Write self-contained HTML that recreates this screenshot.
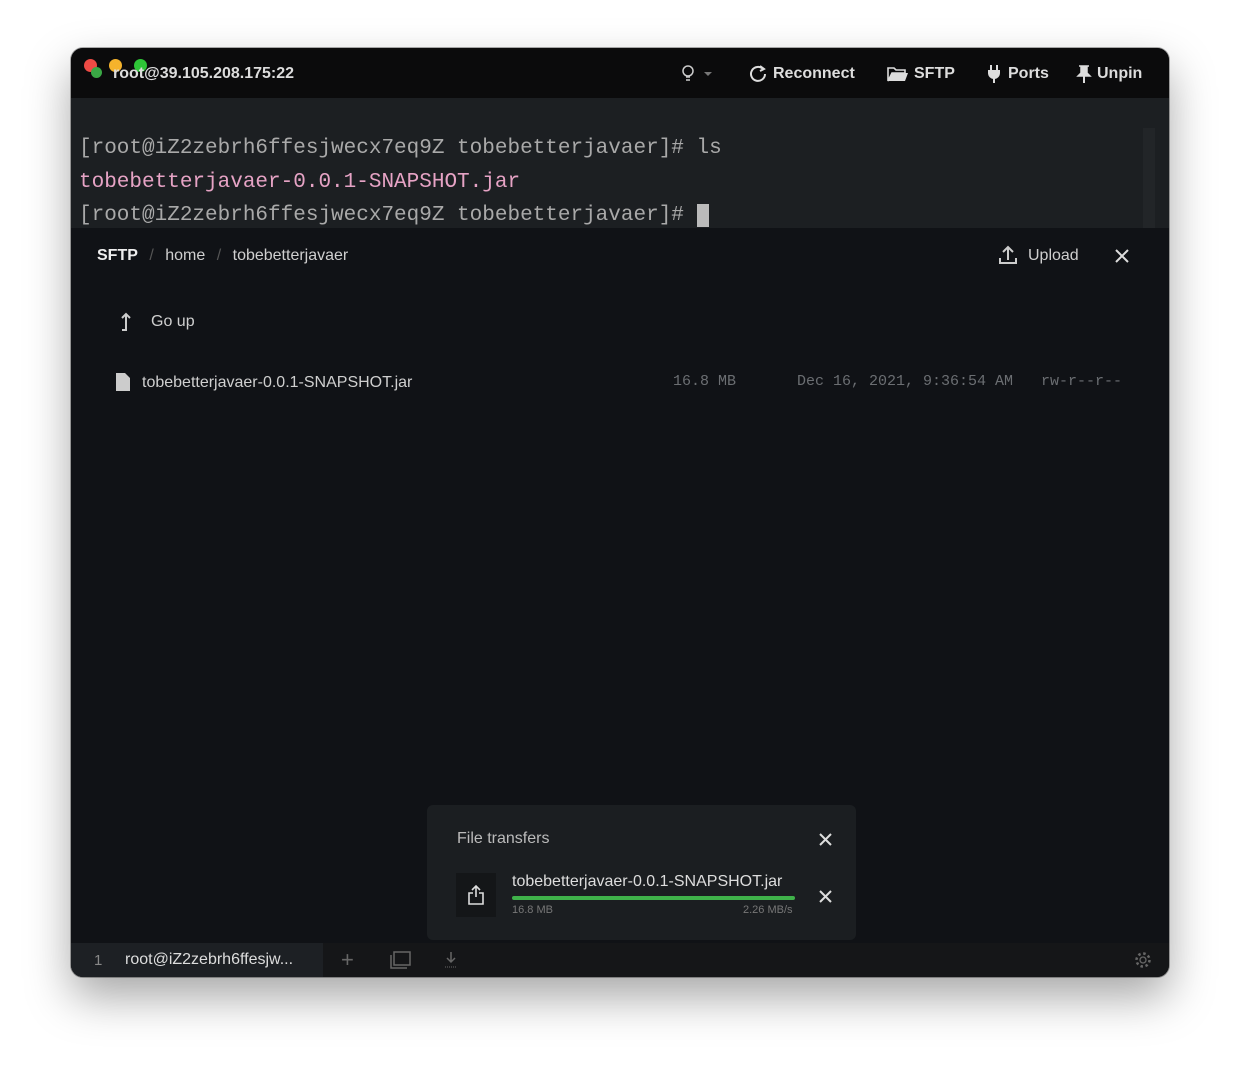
<!DOCTYPE html>
<html><head><style>
*{margin:0;padding:0;box-sizing:border-box}
body{width:1240px;height:1071px;background:#fff;position:relative;overflow:hidden;font-family:"Liberation Sans",sans-serif}
.win{position:absolute;left:71px;top:48px;width:1098px;height:929px;border-radius:12px;overflow:hidden;background:#101216;box-shadow:0 20px 45px rgba(0,0,0,.35),0 0 0 1px rgba(0,0,0,.3)}
.title{position:absolute;left:0;top:0;width:100%;height:50px;background:#0b0b0c;color:#ddd;font-weight:bold;font-size:16px}
.abs{position:absolute}
.term{position:absolute;left:0;top:50px;width:100%;height:130px;background:#1c1f22;font-family:"Liberation Mono",monospace;font-size:21px;color:#a9a9a9}
.term div{position:absolute;left:8px;white-space:pre}
.sftp{position:absolute;left:0;top:180px;width:100%;height:715px;background:#101216;color:#cfcfcf;font-size:16px}
.bottom{position:absolute;left:0;top:895px;width:100%;height:34px;background:#151618}
.mono{font-family:"Liberation Mono",monospace;font-size:15px;color:#6b6e72}
</style></head><body>
<div class="win">
 <div class="title">
  <div class="abs" style="left:13px;top:11px;width:13px;height:13px;border-radius:50%;background:#ee4b45"></div>
  <div class="abs" style="left:20px;top:19px;width:11px;height:11px;border-radius:50%;background:#3aa845"></div>
  <div class="abs" style="left:38px;top:11px;width:13px;height:13px;border-radius:50%;background:#f5b32c"></div>
  <div class="abs" style="left:63px;top:11px;width:13px;height:13px;border-radius:50%;background:#2ec537"></div>
  <div class="abs" style="left:42px;top:17px">root@39.105.208.175:22</div>
  <svg class="abs" style="left:609px;top:16px" width="36" height="20"><circle cx="8" cy="7" r="5" fill="none" stroke="#ccc" stroke-width="1.5"/><path d="M6 13h4M6 16h4" stroke="#ccc" stroke-width="1.5"/><path d="M24 8l4 4 4-4z" fill="#777"/></svg>
  <svg class="abs" style="left:678px;top:16px" width="20" height="20"><path d="M14 5a7 7 0 1 0 2 5" fill="none" stroke="#ddd" stroke-width="2"/><path d="M11 2l4 3-4 2" fill="none" stroke="#ddd" stroke-width="2"/></svg>
  <div class="abs" style="left:702px;top:17px">Reconnect</div>
  <svg class="abs" style="left:816px;top:17px" width="22" height="18"><path d="M1 3h6l2 2h9v3H5L1 16z" fill="none" stroke="#ddd" stroke-width="1.6"/><path d="M5 8h16l-3 8H1z" fill="#ddd"/></svg>
  <div class="abs" style="left:843px;top:17px">SFTP</div>
  <svg class="abs" style="left:915px;top:16px" width="16" height="20"><path d="M5 1v5M11 1v5" stroke="#ddd" stroke-width="2"/><path d="M2 6h12v3a6 6 0 0 1-12 0z" fill="#ddd"/><path d="M8 14v5" stroke="#ddd" stroke-width="2"/></svg>
  <div class="abs" style="left:937px;top:17px">Ports</div>
  <svg class="abs" style="left:1005px;top:16px" width="16" height="20"><path d="M3 2h10M5 2v7l-3 3h12l-3-3V2" fill="#ddd" stroke="#ddd" stroke-width="1.5"/><path d="M8 12v7" stroke="#ddd" stroke-width="2"/></svg>
  <div class="abs" style="left:1026px;top:17px">Unpin</div>
 </div>
 <div class="term">
  <div style="top:39px">[root@iZ2zebrh6ffesjwecx7eq9Z tobebetterjavaer]# ls</div>
  <div style="top:73px;color:#e6a3c5">tobebetterjavaer-0.0.1-SNAPSHOT.jar</div>
  <div style="top:106px">[root@iZ2zebrh6ffesjwecx7eq9Z tobebetterjavaer]# <span style="background:#bbb">&nbsp;</span></div>
  <div style="left:1072px;top:30px;width:12px;height:100px;background:#222528"></div>
 </div>
 <div class="sftp">
  <div class="abs" style="left:26px;top:19px"><b style="color:#eee">SFTP</b> <span style="color:#555;margin:0 7px">/</span> home <span style="color:#555;margin:0 7px">/</span> tobebetterjavaer</div>
  <svg class="abs" style="left:927px;top:17px" width="20" height="20"><path d="M10 15V2M5 7l5-5 5 5" fill="none" stroke="#ccc" stroke-width="2"/><path d="M2 13v5h16v-5" fill="none" stroke="#ccc" stroke-width="2"/></svg>
  <div class="abs" style="left:957px;top:19px">Upload</div>
  <svg class="abs" style="left:1044px;top:21px" width="14" height="14"><path d="M1 1l12 12M13 1L1 13" stroke="#ddd" stroke-width="2"/></svg>
  <svg class="abs" style="left:48px;top:83px" width="14" height="22"><path d="M7 3v16H3M3 7l4-4 4 4" fill="none" stroke="#ccc" stroke-width="2"/></svg>
  <div class="abs" style="left:80px;top:85px">Go up</div>
  <svg class="abs" style="left:45px;top:145px" width="14" height="18"><path d="M0 0h9l5 5v13H0z" fill="#ccc"/></svg>
  <div class="abs" style="left:71px;top:146px">tobebetterjavaer-0.0.1-SNAPSHOT.jar</div>
  <div class="abs mono" style="left:602px;top:145px">16.8 MB</div>
  <div class="abs mono" style="left:726px;top:145px">Dec 16, 2021, 9:36:54 AM</div>
  <div class="abs mono" style="left:970px;top:145px">rw-r--r--</div>
  <div class="abs" style="left:356px;top:577px;width:429px;height:135px;background:#1b1e21;border-radius:6px">
   <div class="abs" style="left:30px;top:25px;color:#bbb">File transfers</div>
   <svg class="abs" style="left:392px;top:28px" width="13" height="13"><path d="M1 1l11 11M12 1L1 12" stroke="#ddd" stroke-width="2"/></svg>
   <div class="abs" style="left:29px;top:68px;width:40px;height:44px;background:#141618"></div>
   <svg class="abs" style="left:40px;top:79px" width="18" height="22"><path d="M9 13V2M5 6l4-4 4 4" fill="none" stroke="#ddd" stroke-width="1.6"/><path d="M6 9H2v11h14V9h-4" fill="none" stroke="#ddd" stroke-width="1.6"/></svg>
   <div class="abs" style="left:85px;top:68px;color:#ddd">tobebetterjavaer-0.0.1-SNAPSHOT.jar</div>
   <div class="abs" style="left:85px;top:91px;width:283px;height:4px;background:#3fb24a;border-radius:2px"></div>
   <div class="abs" style="left:85px;top:99px;font-size:11px;color:#777">16.8 MB</div>
   <div class="abs" style="left:316px;top:99px;font-size:11px;color:#777">2.26 MB/s</div>
   <svg class="abs" style="left:392px;top:85px" width="13" height="13"><path d="M1 1l11 11M12 1L1 12" stroke="#ddd" stroke-width="2"/></svg>
  </div>
 </div>
 <div class="bottom">
  <div class="abs" style="left:0;top:0;width:252px;height:34px;background:#1d2024"></div>
  <div class="abs" style="left:23px;top:9px;color:#888;font-size:15px">1</div>
  <div class="abs" style="left:54px;top:8px;color:#ddd;font-size:16px">root@iZ2zebrh6ffesjw...</div>
  <div class="abs" style="left:270px;top:4px;color:#666;font-size:22px">+</div>
  <svg class="abs" style="left:319px;top:8px" width="22" height="18"><rect x="4" y="1" width="16" height="13" fill="none" stroke="#666" stroke-width="1.5"/><path d="M1 4v13h16" fill="none" stroke="#666" stroke-width="1.5"/></svg>
  <svg class="abs" style="left:373px;top:8px" width="14" height="18"><path d="M7 1v10M3 7l4 4 4-4" fill="none" stroke="#666" stroke-width="1.5"/><path d="M1 16h12" stroke="#666" stroke-dasharray="1 1"/></svg>
  <svg class="abs" style="left:1063px;top:8px" width="18" height="18"><circle cx="9" cy="9" r="3" fill="none" stroke="#666" stroke-width="1.3"/><circle cx="9" cy="9" r="6.5" fill="none" stroke="#666" stroke-width="2.5" stroke-dasharray="2.5 2.6"/></svg>
 </div>
</div>
</body></html>
